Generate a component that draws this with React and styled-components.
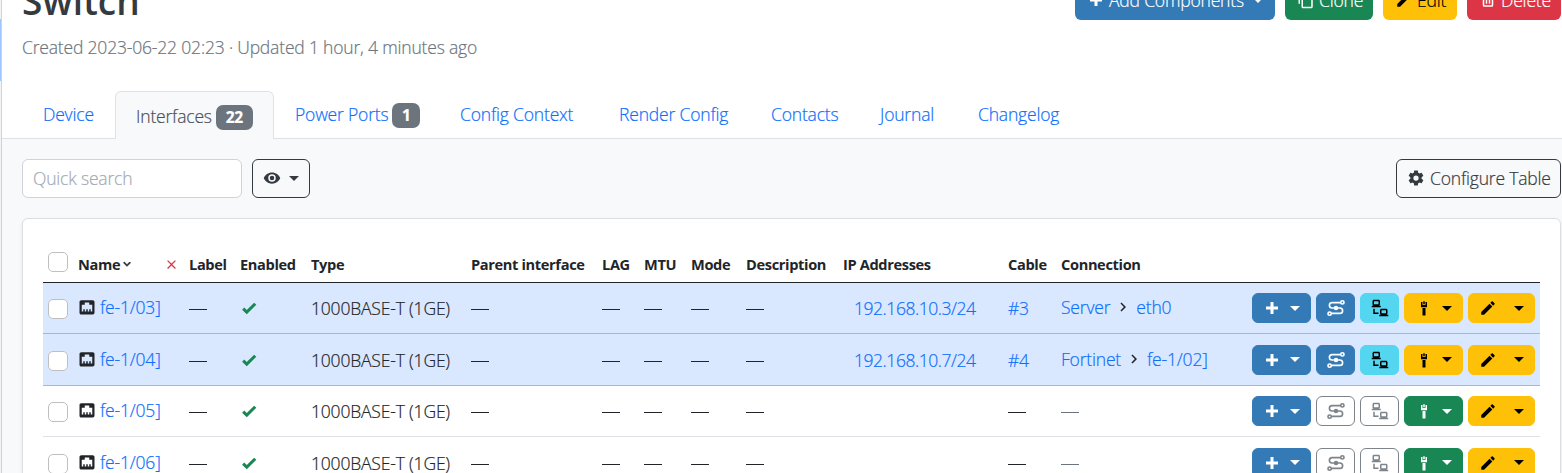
import React from "react";
import styled, { createGlobalStyle } from "styled-components";

const Global = createGlobalStyle`
  * { box-sizing: border-box; }
  html, body { margin: 0; height: 473px; overflow: hidden; background: #fff; }
  body {
    font-family: "Open Sans", "Noto Sans", sans-serif;
    font-size: 17.5px;
    font-weight: 300;
    -webkit-text-stroke: 0.2px;
    letter-spacing: -0.18px;
    line-height: 26px;
    color: #212529;
  }
`;

const ICONS = {
  plus: "M20 14H14V20H10V14H4V10H10V4H14V10H20V14Z",
  copy: "M19,21H8V7H19M19,5H8A2,2 0 0,0 6,7V21A2,2 0 0,0 8,23H19A2,2 0 0,0 21,21V7A2,2 0 0,0 19,5M16,1H4A2,2 0 0,0 2,3V17H4V3H16V1Z",
  pencil: "M20.71,7.04C21.1,6.65 21.1,6 20.71,5.63L18.37,3.29C18,2.9 17.35,2.9 16.96,3.29L15.12,5.12L18.87,8.87M3,17.25V21H6.75L17.81,9.93L14.06,6.18L3,17.25Z",
  trash: "M9,3V4H4V6H5V19A2,2 0 0,0 7,21H17A2,2 0 0,0 19,19V6H20V4H15V3H9M7,6H17V19H7V6M9,8V17H11V8H9M13,8V17H15V8H13Z",
  eye: "M12,9A3,3 0 0,0 9,12A3,3 0 0,0 12,15A3,3 0 0,0 15,12A3,3 0 0,0 12,9M12,17A5,5 0 0,1 7,12A5,5 0 0,1 12,7A5,5 0 0,1 17,12A5,5 0 0,1 12,17M12,4.5C7,4.5 2.73,7.61 1,12C2.73,16.39 7,19.5 12,19.5C17,19.5 21.27,16.39 23,12C21.27,7.61 17,4.5 12,4.5Z",
  cog: "M12,15.5A3.5,3.5 0 0,1 8.5,12A3.5,3.5 0 0,1 12,8.5A3.5,3.5 0 0,1 15.5,12A3.5,3.5 0 0,1 12,15.5M19.43,12.97C19.47,12.65 19.5,12.33 19.5,12C19.5,11.67 19.47,11.34 19.43,11L21.54,9.37C21.73,9.22 21.78,8.95 21.66,8.73L19.66,5.27C19.54,5.05 19.27,4.96 19.05,5.05L16.56,6.05C16.04,5.66 15.5,5.32 14.87,5.07L14.5,2.42C14.46,2.18 14.25,2 14,2H10C9.75,2 9.54,2.18 9.5,2.42L9.13,5.07C8.5,5.32 7.96,5.66 7.44,6.05L4.95,5.05C4.73,4.96 4.46,5.05 4.34,5.27L2.34,8.73C2.21,8.95 2.27,9.22 2.46,9.37L4.57,11C4.53,11.34 4.5,11.67 4.5,12C4.5,12.33 4.53,12.65 4.57,12.97L2.46,14.63C2.27,14.78 2.21,15.05 2.34,15.27L4.34,18.73C4.46,18.95 4.73,19.03 4.95,18.95L7.44,17.94C7.96,18.34 8.5,18.68 9.13,18.93L9.5,21.58C9.54,21.82 9.75,22 10,22H14C14.25,22 14.46,21.82 14.5,21.58L14.87,18.93C15.5,18.67 16.04,18.34 16.56,17.94L19.05,18.95C19.27,19.03 19.54,18.95 19.66,18.73L21.66,15.27C21.78,15.05 21.73,14.78 21.54,14.63L19.43,12.97Z",
  ethernet: "M7,15H9V18H11V15H13V18H15V15H17V18H19V9H15V6H9V9H5V18H7V15M4.38,3H19.63C20.94,3 22,4.06 22,5.38V19.63A2.37,2.37 0 0,1 19.63,22H4.38C3.06,22 2,20.94 2,19.63V5.38C2,4.06 3.06,3 4.38,3Z",
  check: "M9,20.42L2.79,14.21L5.62,11.38L9,14.77L18.88,4.88L21.71,7.71L9,20.42Z",
  close: "M19,6.41L17.59,5L12,10.59L6.41,5L5,6.41L10.59,12L5,17.59L6.41,19L12,13.41L17.59,19L19,17.59L13.41,12L19,6.41Z",
  chevronDown: "M7.41,8.58L12,13.17L16.59,8.58L18,10L12,16L6,10L7.41,8.58Z",
  chevronRight: "M8.59,16.58L13.17,12L8.59,7.41L10,6L16,12L10,18L8.59,16.58Z",
  lan: "M4,1C2.89,1 2,1.89 2,3V7C2,8.11 2.89,9 4,9H1V11H13V9H10C11.11,9 12,8.11 12,7V3C12,1.89 11.11,1 10,1H4M4,3H10V7H4V3M3,13V18L3,20H10V18H5V13H3M14,13C12.89,13 12,13.89 12,15V19C12,20.11 12.89,21 14,21H11V23H23V21H20C21.11,21 22,20.11 22,19V15C22,13.89 21.11,13 20,13H14M14,15H20V19H14V15Z",
  cable: "M11,3V7H13V3H11M8,4V11H16V4H14V8H10V4H8M10,12V22H14V12H10Z",
};

const Svg = styled.svg`
  display: block;
  flex: none;
`;

function Icon({ name, size = 18, bold }) {
  return (
    <Svg width={size} height={size} viewBox="0 0 24 24" fill="currentColor"
      stroke={bold ? "currentColor" : "none"} strokeWidth={bold ? 1.2 : 0}>
      <path d={ICONS[name]} />
    </Svg>
  );
}

function TraceIcon() {
  return (
    <Svg width="18" height="18" viewBox="0 0 24 24" fill="none" stroke="currentColor" strokeWidth="2.2">
      <circle cx="20.5" cy="4.5" r="2.2" />
      <circle cx="3.5" cy="19.5" r="2.2" />
      <path d="M18.3 4.8H6.8a3.6 3.6 0 0 0 0 7.2h10.4a3.6 3.6 0 0 1 0 7.2H5.7" />
      <circle cx="12" cy="12" r="3" fill="currentColor" stroke="none" />
    </Svg>
  );
}

const Shell = styled.div`
  display: flex;
  height: 473px;
  overflow: hidden;
`;
const SidebarEdge = styled.div`
  width: 2px;
  flex: none;
  border-right: 1px solid #ced4da;
  background: linear-gradient(#f1f3f5 19px, #9ec5fe 19px, #9ec5fe 81px, #f1f3f5 81px);
`;
const Main = styled.main`
  flex: 1;
  min-width: 0;
  display: flex;
  flex-direction: column;
`;
const Header = styled.header`
  display: flex;
  flex: none;
  justify-content: space-between;
  height: 91px;
  padding: 0 1px 0 20px;
`;
const Heading = styled.div`
  margin-top: -20px;
`;
const Title = styled.h1`
  margin: 0 0 12px;
  font-size: 37px;
  line-height: 42px;
  font-weight: 600;
  letter-spacing: 0.1px;
  -webkit-text-stroke: 0;
  color: #343a40;
`;
const Subtitle = styled.div`
  color: #6c757d;
`;
const HeaderActions = styled.div`
  display: flex;
  gap: 10px;
  margin-top: -19px;
`;
const HeaderButton = styled.div`
  display: flex;
  align-items: center;
  gap: 4px;
  width: ${(p) => p.$w}px;
  height: 39px;
  padding: 0 0 1px 12px;
  white-space: nowrap;
  border-radius: 6px;
  background: ${(p) => p.$bg};
  color: ${(p) => p.$fg || "#fff"};
`;
const Caret = styled.i`
  width: 0;
  height: 0;
  border: 5px solid transparent;
  border-top-color: currentColor;
  border-bottom: 0;
  margin-left: ${(p) => p.$ml || 0}px;
`;

const Tabs = styled.nav`
  display: flex;
  flex: none;
  height: 48px;
  padding-left: 20px;
  border-bottom: 1px solid #dee2e6;
`;
const Tab = styled.a`
  display: flex;
  align-items: center;
  width: ${(p) => p.$w}px;
  height: 48px;
  padding: 0 0 2px 21px;
  white-space: nowrap;
  color: #0d6efd;
  ${(p) => p.$active && `
    padding: 1px 0 0 20px;
    color: #495057;
    background: #f8f9fb;
    border: 1px solid #dee2e6;
    border-bottom: 0;
    border-radius: 6px 6px 0 0;
  `}
`;
const Badge = styled.span`
  margin: 2px 0 0 4px;
  width: ${(p) => p.$w}px;
  height: 25px;
  line-height: 25px;
  border-radius: 7px;
  background: #6c757d;
  color: #fff;
  font-size: 15.5px;
  font-weight: 700;
  text-align: center;
`;

const Content = styled.section`
  flex: 1;
  padding: 20px 1px 0 20px;
  background: #f8f9fb;
`;
const Toolbar = styled.div`
  display: flex;
  gap: 10px;
  height: 39px;
  margin-bottom: 20px;
`;
const Search = styled.div`
  width: 220px;
  padding: 5px 10px;
  border: 1px solid #ced4da;
  border-radius: 6px;
  background: #fff;
  color: #a3abb3;
`;
const OutlineButton = styled.div`
  display: flex;
  align-items: center;
  gap: 5px;
  width: ${(p) => p.$w}px;
  padding: 0 0 1px ${(p) => p.$pl}px;
  margin-left: ${(p) => (p.$end ? "auto" : 0)};
  white-space: nowrap;
  border: 1px solid #343a40;
  border-radius: 6px;
  color: #343a40;
`;

const Card = styled.div`
  height: 300px;
  padding: 20px;
  border: 1px solid #dcdfe2;
  border-radius: 6px;
  background: #fff;
  box-shadow: 0 2px 4px rgba(0, 0, 0, 0.075);
`;
const Row = styled.div`
  display: grid;
  grid-template-columns: 30px 111px 51px 71px 160px 131px 42px 47px 55px 97px 165px 53px 1fr;
  align-items: center;
  height: ${(p) => p.$h || 51}px;
  padding-left: 5px;
  white-space: nowrap;
  border-bottom: 1px solid ${(p) => (p.$on ? "#aab7c6" : "#dee2e6")};
  background: ${(p) => (p.$on ? "#dae8ff" : "#fff")};
`;
const HeadRow = styled(Row)`
  height: 44px;
  padding-top: 7px;
  border-bottom-color: #212529;
  font-size: 14.6px;
  font-weight: 700;
  letter-spacing: -0.35px;
  -webkit-text-stroke: 0;
`;
const Checkbox = styled.span`
  width: 20px;
  height: 20px;
  margin-top: ${(p) => p.$mt || 0}px;
  border: 1px solid #bfbfbf;
  border-radius: 5px;
  background: #fff;
`;
const NameHead = styled.div`
  display: flex;
  align-items: center;
`;
const ClearSort = styled.span`
  margin-left: auto;
  padding-right: 10px;
  color: #dc3545;
`;
const NameCell = styled.div`
  display: flex;
  align-items: center;
  gap: 4px;
  padding-bottom: 2px;
`;
const Link = styled.a`
  color: #0d6efd;
`;
const IpCell = styled.div`
  padding-left: 11px;
  letter-spacing: -0.45px;
  color: #0d6efd;
`;
const Dash = styled.span`
  display: block;
  width: 18px;
  height: 1px;
  margin-top: 3px;
  overflow: hidden;
  color: transparent;
  background: ${(p) => (p.$muted ? "#6c757d" : "#212529")};
`;
const Enabled = styled.span`
  color: #198754;
`;
const LastCell = styled.div`
  display: flex;
  align-items: center;
  justify-content: space-between;
  padding-right: 5px;
`;
const Path = styled.div`
  display: flex;
  align-items: center;
  gap: 4px;
  padding-bottom: 2px;
`;
const Actions = styled.div`
  display: flex;
  gap: 5px;
`;
const ActionButton = styled.div`
  display: flex;
  align-items: center;
  justify-content: center;
  gap: ${(p) => p.$gap || 0}px;
  width: ${(p) => p.$w || 39}px;
  height: 30px;
  border-radius: 6px;
  border: 1px solid ${(p) => p.$line || p.$bg};
  background: ${(p) => p.$bg};
  color: ${(p) => p.$fg || "#fff"};
`;

const EmDash = ({ muted }) => <Dash $muted={muted}>—</Dash>;

const TABS = [
  ["Device", 93], ["Interfaces", 159, 22, 37], ["Power Ports", 165, 1, 28], ["Config Context", 159],
  ["Render Config", 152], ["Contacts", 109], ["Journal", 98], ["Changelog", 125],
];

const ROWS = [
  { name: "fe-1/03]", ip: "192.168.10.3/24", cable: "#3", path: ["Server", "eth0"], h: 51 },
  { name: "fe-1/04]", ip: "192.168.10.7/24", cable: "#4", path: ["Fortinet", "fe-1/02]"], h: 52 },
  { name: "fe-1/05]", h: 51 },
  { name: "fe-1/06]", h: 52 },
];

function RowActions({ connected }) {
  const idle = connected ? {} : { $bg: "#fff", $line: "#7d848a", $fg: "#7d848a" };
  return (
    <Actions>
      <ActionButton $w={59} $gap={9} $bg="#337ab7"><Icon name="plus" /><Caret /></ActionButton>
      <ActionButton $bg="#337ab7" {...idle}><TraceIcon /></ActionButton>
      <ActionButton $bg="#54d6f0" $fg="#000" {...idle}><Icon name="lan" /></ActionButton>
      <ActionButton $w={59} $gap={9} $bg={connected ? "#ffc107" : "#198754"} $fg={connected ? "#000" : "#fff"}>
        <Icon name="cable" /><Caret />
      </ActionButton>
      <ActionButton $w={67} $gap={17} $bg="#ffc107" $fg="#000"><Icon name="pencil" /><Caret /></ActionButton>
    </Actions>
  );
}

function InterfaceRow({ row }) {
  const on = Boolean(row.path);
  return (
    <Row $on={on} $h={row.h}>
      <Checkbox $mt={2} />
      <NameCell><Icon name="ethernet" /><Link>{row.name}</Link></NameCell>
      <EmDash />
      <Enabled><Icon name="check" size={18} /></Enabled>
      <span>1000BASE-T (1GE)</span>
      <EmDash /><EmDash /><EmDash /><EmDash /><EmDash />
      <IpCell>{row.ip}</IpCell>
      {on ? <Link>{row.cable}</Link> : <EmDash />}
      <LastCell>
        {on ? (
          <Path><Link>{row.path[0]}</Link><Icon name="chevronRight" /><Link>{row.path[1]}</Link></Path>
        ) : <EmDash muted />}
        <RowActions connected={on} />
      </LastCell>
    </Row>
  );
}

export default function App() {
  return (
    <Shell>
      <Global />
      <SidebarEdge />
      <Main>
        <Header>
          <Heading>
            <Title>Switch</Title>
            <Subtitle>Created 2023-06-22 02:23 · Updated 1 hour, 4 minutes ago</Subtitle>
          </Heading>
          <HeaderActions>
            <HeaderButton $w={200} $bg="#337ab7"><Icon name="plus" />Add Components<Caret $ml={5} /></HeaderButton>
            <HeaderButton $w={88} $bg="#198754"><Icon name="copy" />Clone</HeaderButton>
            <HeaderButton $w={74} $bg="#ffc107" $fg="#000"><Icon name="pencil" />Edit</HeaderButton>
            <HeaderButton $w={94} $bg="#dc3545"><Icon name="trash" />Delete</HeaderButton>
          </HeaderActions>
        </Header>
        <Tabs>
          {TABS.map(([label, w, count, bw]) => (
            <Tab key={label} $w={w} $active={label === "Interfaces"}>
              {label}{count && <Badge $w={bw}>{count}</Badge>}
            </Tab>
          ))}
        </Tabs>
        <Content>
          <Toolbar>
            <Search>Quick search</Search>
            <OutlineButton $w={58} $pl={10}><Icon name="eye" /><Caret $ml={3} /></OutlineButton>
            <OutlineButton $w={165} $pl={10} $end><Icon name="cog" />Configure Table</OutlineButton>
          </Toolbar>
          <Card>
            <HeadRow>
              <Checkbox $mt={-4} />
              <NameHead>Name<Icon name="chevronDown" size={14} bold /><ClearSort><Icon name="close" size={15} /></ClearSort></NameHead>
              <span>Label</span><span>Enabled</span><span>Type</span><span>Parent interface</span>
              <span>LAG</span><span>MTU</span><span>Mode</span><span>Description</span>
              <span>IP Addresses</span><span>Cable</span><span>Connection</span>
            </HeadRow>
            {ROWS.map((row) => <InterfaceRow key={row.name} row={row} />)}
          </Card>
        </Content>
      </Main>
    </Shell>
  );
}
